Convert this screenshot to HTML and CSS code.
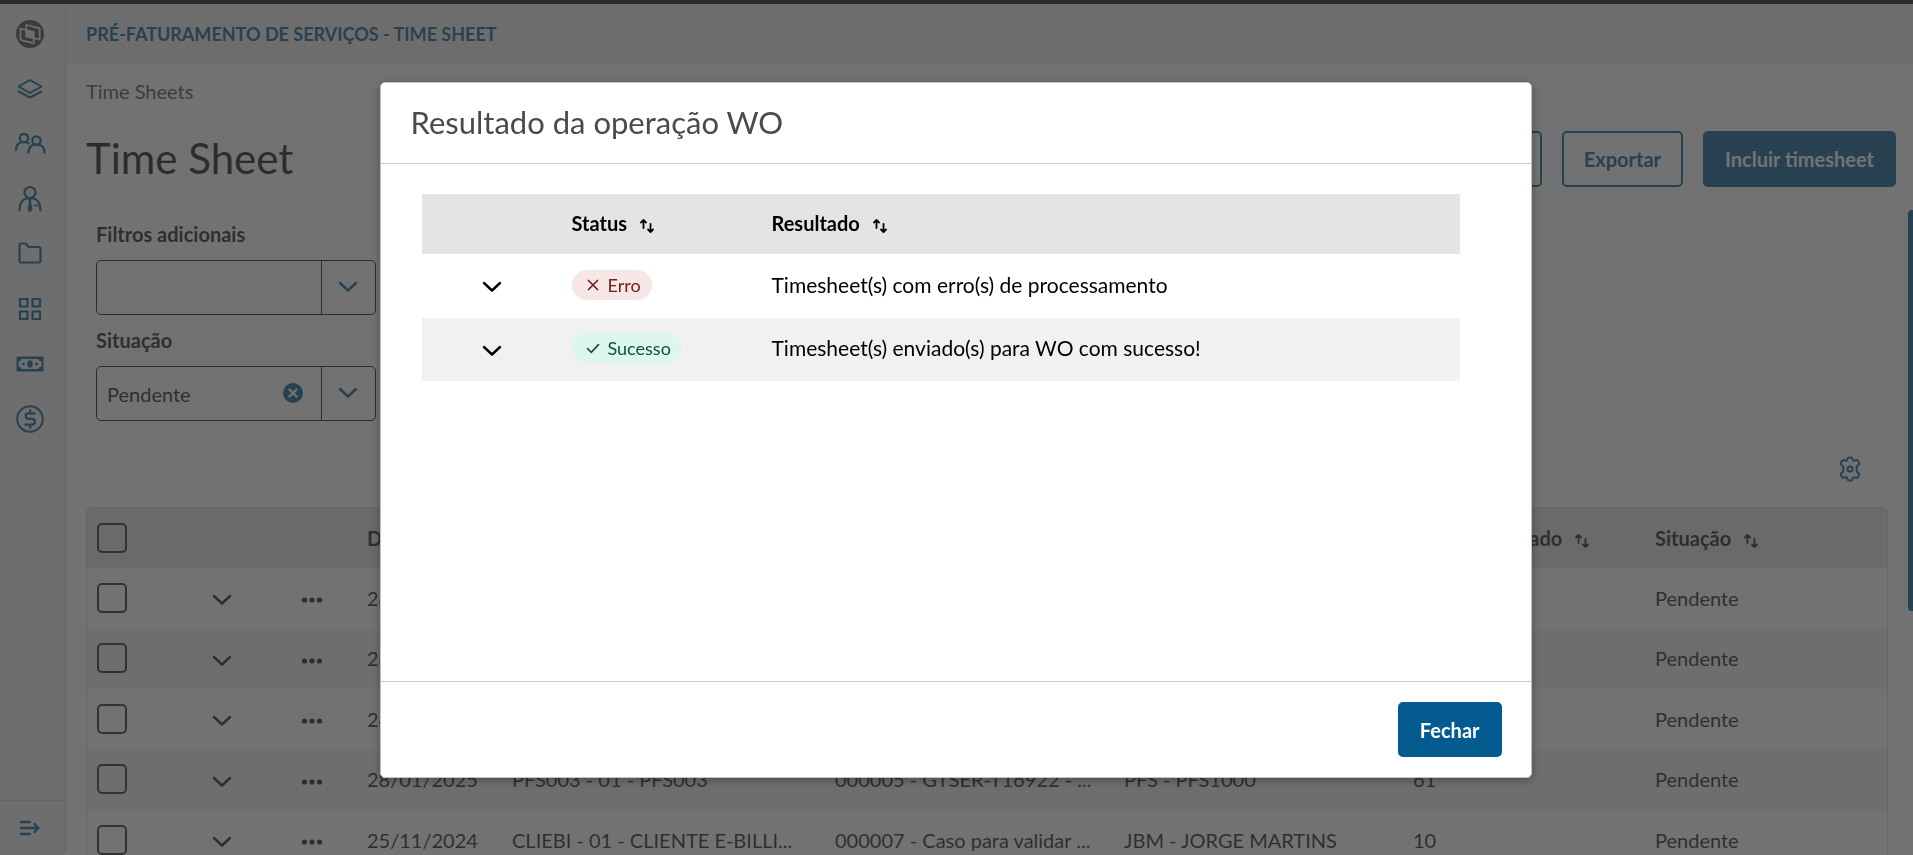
FILE: index.html
```html
<!DOCTYPE html>
<html lang="pt-BR">
<head>
<meta charset="utf-8">
<title>Time Sheet</title>
<link rel="stylesheet" href="styles.css">
</head>
<body>
<svg class="defs" aria-hidden="true">
  <symbol id="chevron" viewBox="0 0 20 12"><path d="M2 2l8 7.500 8-7.500" fill="none" stroke="currentColor" stroke-width="2.400" stroke-linecap="round" stroke-linejoin="round"/></symbol>
  <symbol id="dots" viewBox="0 0 22 8"><circle cx="3.500" cy="4" r="2.600" fill="currentColor"/><circle cx="11" cy="4" r="2.600" fill="currentColor"/><circle cx="18.500" cy="4" r="2.600" fill="currentColor"/></symbol>
  <symbol id="sort" viewBox="0 0 16 16"><g fill="none" stroke="currentColor" stroke-width="1.800" stroke-linecap="round" stroke-linejoin="round"><path d="M4.500 10V2.500M2 4.500l2.500-2.500L7 4.500"/><path d="M11.500 6v7.500M9 11.500l2.500 2.500 2.500-2.500"/></g></symbol>
</svg>
<div class="app">
  <nav class="sidebar" aria-label="Menu">
    <div class="menu">
      <a href="#" class="logo" aria-label="Início"><svg width="28" height="28" viewBox="0 0 28 28"><circle cx="14" cy="14" r="14" fill="currentColor"/><path class="logo-plate" fill-rule="evenodd" d="M9.300 3.900l13.700 3.200q1.500.400 1.500 2v11.300l-5.900-1.200v5L5 21q-1.400-.400-1.400-2V7.700l5.700 1.300zM11 6v3.400l7.600 1.800v6.300l4.200 1V9.800q0-.8-.8-1zM9.300 10.800l-4 -.9v8.500q0 .8.800 1l10.700 2.500v-2.800L9.300 17.300z"/></svg></a>
      <a href="#" aria-label="Camadas"><svg width="28" height="28" viewBox="0 0 28 28" fill="none" stroke="currentColor" stroke-width="2" stroke-linecap="round" stroke-linejoin="round"><path d="M14 5l11.500 6.500L14 18 2.500 11.500z"/><path d="M2.500 16.500L14 22.500l11.500-6"/></svg></a>
      <a href="#" aria-label="Clientes"><svg width="32" height="24" viewBox="0 0 32 24" fill="none" stroke="currentColor" stroke-width="2.200" stroke-linecap="round"><circle cx="10" cy="6" r="4.200"/><circle cx="22.500" cy="8.500" r="4.200"/><path d="M2 18c0-5 3-8 8-8 2 0 3.500.400 4.800 1.500M14.500 20.500c0-5 3-8 8-8s8 3 8 8"/></svg></a>
      <a href="#" aria-label="Profissionais"><svg width="26" height="28" viewBox="0 0 26 28" fill="none" stroke="currentColor" stroke-width="2.200" stroke-linecap="round"><circle cx="13" cy="7.500" r="5.500"/><path d="M2.600 25.500c0-8 3.400-12.500 10.400-12.500s10.400 4.500 10.400 12.500"/><path d="M17.500 20.500h3" stroke-width="1.500"/><path d="M11 13h4l-1 3.500 1.500 8L13 27.500l-2.500-3 1.500-8z" fill="currentColor" stroke="none"/></svg></a>
      <a href="#" aria-label="Pastas"><svg width="26" height="24" viewBox="0 0 26 24" fill="none" stroke="currentColor" stroke-width="2.200" stroke-linejoin="round"><path d="M2.500 3.500a2 2 0 0 1 2-2h4.200l3 3.500h9.800a2 2 0 0 1 2 2v11.500a2 2 0 0 1-2 2h-17a2 2 0 0 1-2-2z"/></svg></a>
      <a href="#" aria-label="Módulos"><svg width="24" height="24" viewBox="0 0 24 24" fill="none" stroke="currentColor" stroke-width="2.200" stroke-linejoin="round"><path d="M2 2h7.500v7.500H2zM14.500 2H22v7.500h-7.500zM2 14.500h7.500V22H2zM14.500 14.500H22V22h-7.500z"/></svg></a>
      <a href="#" aria-label="Faturamento"><svg width="28" height="16" viewBox="0 0 28 16"><path fill="currentColor" fill-rule="evenodd" d="M1.500.500h25a1 1 0 0 1 1 1v13a1 1 0 0 1-1 1h-25a1 1 0 0 1-1-1v-13a1 1 0 0 1 1-1zM5.500 3a3 3 0 0 1-3 2.500v5a3 3 0 0 1 3 2.500h17a3 3 0 0 1 3-2.500v-5a3 3 0 0 1-3-2.500z"/><ellipse cx="14" cy="8" rx="2.700" ry="3.800" fill="currentColor"/><circle cx="7.500" cy="8" r="1.400" fill="currentColor"/><circle cx="20.500" cy="8" r="1.400" fill="currentColor"/></svg></a>
      <a href="#" aria-label="Financeiro"><svg width="28" height="28" viewBox="0 0 28 28" fill="none" stroke="currentColor" stroke-width="2" stroke-linecap="round"><circle cx="14" cy="14" r="12.800"/><path stroke-width="2.300" d="M18.800 8.300h-6.300a2.800 2.800 0 0 0 0 5.600h3.500a2.900 2.900 0 0 1 0 5.800H9.500M14.200 5.500v2.500M14.200 20v2.500"/></svg></a>
    </div>
    <a href="#" class="expand" aria-label="Expandir menu"><svg width="22" height="18" viewBox="0 0 22 18" fill="none" stroke="currentColor" stroke-width="2.300" stroke-linecap="round" stroke-linejoin="round"><path d="M2 3h9M2 9h17M2 15h9M15.500 5l4 4-4 4"/></svg></a>
  </nav>
  <div class="main">
    <header class="topbar">PRÉ-FATURAMENTO DE SERVIÇOS - TIME SHEET</header>
    <main class="page">
      <div class="crumbs">Time Sheets</div>
      <div class="page-head">
        <h1>Time Sheet</h1>
        <div class="actions">
          <button type="button" class="btn">Ações</button>
          <button type="button" class="btn">Exportar</button>
          <button type="button" class="btn btn-primary">Incluir timesheet</button>
        </div>
      </div>
      <form class="filters">
        <label for="extra">Filtros adicionais</label>
        <div class="combo"><select id="extra"><option></option></select><svg class="combo-arrow" width="20" height="12"><use href="#chevron"/></svg></div>
        <label for="status">Situação</label>
        <div class="combo"><select id="status"><option>Pendente</option></select><button type="button" class="clear" aria-label="Limpar"><svg width="20" height="20" viewBox="0 0 20 20"><circle cx="10" cy="10" r="10" fill="currentColor"/><path d="M6.500 6.500l7 7M13.500 6.500l-7 7" stroke="#fff" stroke-width="2.400" stroke-linecap="round"/></svg></button><svg class="combo-arrow" width="20" height="12"><use href="#chevron"/></svg></div>
      </form>
      <div class="tools"><button type="button" class="gear" aria-label="Configurar colunas"><svg width="26" height="26" viewBox="0 0 26 26" fill="none" stroke="currentColor" stroke-width="2" stroke-linejoin="round"><path d="M10.500 2.800q.300-1.300 1.500-1.300h2q1.200 0 1.500 1.300l.4 1.300q.4 1 1.500.6l1.500-.6q1.200-.4 1.900.7l1.200 2q.6 1.100-.3 2l-1.200 1q-.8.7-.8 1.500v3.400q0 .8.800 1.500l1.200 1q.9.900.3 2l-1.200 2q-.7 1.100-1.900.7l-1.500-.6q-1.100-.4-1.500.6l-.4 1.300q-.3 1.300-1.500 1.300h-2q-1.200 0-1.500-1.300l-.4-1.300q-.4-1-1.500-.6l-1.500.6q-1.200.4-1.900-.7l-1.200-2q-.6-1.100.3-2l1.200-1q.8-.7.800-1.500v-3.400q0-.8-.8-1.500l-1.200-1q-.9-.9-.3-2l1.200-2q.7-1.100 1.900-.7l1.500.6q1.100.4 1.500-.6z"/><circle cx="13" cy="13" r="2.600"/></svg></button></div>
      <div class="grid-box">
        <table class="grid">
          <colgroup><col class="c-act"><col class="c-act"><col class="c-act"><col class="c-date"><col class="c-client"><col class="c-case"><col class="c-case"><col class="c-num"><col class="c-num"></colgroup>
          <thead><tr><th><input type="checkbox" aria-label="Selecionar todos"></th><th></th><th></th><th>Data</th><th>Cliente</th><th>Caso</th><th>Participante</th><th>Tempo apontado<svg class="sort" width="16" height="16"><use href="#sort"/></svg></th><th>Situação<svg class="sort" width="16" height="16"><use href="#sort"/></svg></th></tr></thead>
          <tbody>
            <tr><td><input type="checkbox" aria-label="Selecionar"></td><td class="mid"><svg width="20" height="12"><use href="#chevron"/></svg></td><td class="mid"><svg width="22" height="8"><use href="#dots"/></svg></td><td>28/01/2025</td><td></td><td></td><td></td><td></td><td>Pendente</td></tr>
            <tr><td><input type="checkbox" aria-label="Selecionar"></td><td class="mid"><svg width="20" height="12"><use href="#chevron"/></svg></td><td class="mid"><svg width="22" height="8"><use href="#dots"/></svg></td><td>28/01/2025</td><td></td><td></td><td></td><td></td><td>Pendente</td></tr>
            <tr><td><input type="checkbox" aria-label="Selecionar"></td><td class="mid"><svg width="20" height="12"><use href="#chevron"/></svg></td><td class="mid"><svg width="22" height="8"><use href="#dots"/></svg></td><td>28/01/2025</td><td></td><td></td><td></td><td></td><td>Pendente</td></tr>
            <tr><td><input type="checkbox" aria-label="Selecionar"></td><td class="mid"><svg width="20" height="12"><use href="#chevron"/></svg></td><td class="mid"><svg width="22" height="8"><use href="#dots"/></svg></td><td>28/01/2025</td><td>PFS003 - 01 - PFS003</td><td>000005 - GTSER-T16922 - ...</td><td>PFS - PFS1000</td><td>61</td><td>Pendente</td></tr>
            <tr><td><input type="checkbox" aria-label="Selecionar"></td><td class="mid"><svg width="20" height="12"><use href="#chevron"/></svg></td><td class="mid"><svg width="22" height="8"><use href="#dots"/></svg></td><td>25/11/2024</td><td>CLIEBI - 01 - CLIENTE E-BILLI...</td><td>000007 - Caso para validar ...</td><td>JBM - JORGE MARTINS</td><td>10</td><td>Pendente</td></tr>
          </tbody>
        </table>
      </div>
      <div class="scroll-thumb"></div>
    </main>
  </div>
</div>
<div class="overlay">
  <section class="modal" role="dialog" aria-modal="true" aria-labelledby="modal-title">
    <header class="modal-head"><h2 id="modal-title">Resultado da operação WO</h2></header>
    <div class="modal-body">
      <table class="results">
        <colgroup><col class="r-toggle"><col class="r-status"><col></colgroup>
        <thead><tr><th></th><th>Status<svg class="sort" width="16" height="16"><use href="#sort"/></svg></th><th>Resultado<svg class="sort" width="16" height="16"><use href="#sort"/></svg></th></tr></thead>
        <tbody>
          <tr><td class="toggle"><button type="button" aria-label="Detalhes"><svg width="20" height="12"><use href="#chevron"/></svg></button></td><td><span class="tag tag-error"><svg width="14" height="14" viewBox="0 0 14 14"><path d="M2.500 2.500l9 9M11.500 2.500l-9 9" stroke="currentColor" stroke-width="1.700" stroke-linecap="round"/></svg>Erro</span></td><td>Timesheet(s) com erro(s) de processamento</td></tr>
          <tr><td class="toggle"><button type="button" aria-label="Detalhes"><svg width="20" height="12"><use href="#chevron"/></svg></button></td><td><span class="tag tag-ok"><svg width="14" height="14" viewBox="0 0 14 14"><path d="M1.500 7.500l3.800 3.800 7.200-7.600" fill="none" stroke="currentColor" stroke-width="1.700" stroke-linecap="round"/></svg>Sucesso</span></td><td>Timesheet(s) enviado(s) para WO com sucesso!</td></tr>
        </tbody>
      </table>
    </div>
    <footer class="modal-foot"><button type="button" class="btn btn-primary">Fechar</button></footer>
  </section>
</div>
</body>
</html>
```

FILE: styles.css
```css
* { box-sizing: border-box; }
body {
  margin: 0;
  height: 100vh;
  overflow: hidden;
  font: 20px/28px Lato, "Noto Sans", sans-serif;
  color: #1d1d1d;
  background: #fff;
}
.defs { position: absolute; width: 0; height: 0; }
h1, h2 { margin: 0; font-weight: 400; }
button, select, input { font: inherit; color: inherit; }

.app { display: flex; height: 100vh; border-top: 4px solid #141414; }
.sidebar {
  display: flex;
  flex-direction: column;
  flex: none;
  width: 66px;
  background: #f0f0f0;
  border-right: 1px solid #d0d0d0;
  border-radius: 0 6px 6px 0;
}
.sidebar a { color: #045b8f; display: flex; justify-content: center; align-items: center; }
.menu { flex: 1; padding: 2px 5px 0 0; }
.menu a { height: 55px; }
.menu .logo { color: #3c4a50; }
.logo-plate { fill: #f0f0f0; }
.expand { height: 55px; padding-right: 5px; border-top: 1px solid #d0d0d0; }

.main { flex: 1; min-width: 0; }
.topbar {
  height: 60px;
  padding-left: 20px;
  line-height: 60px;
  font-size: 18px;
  font-weight: 700;
  color: #045b8f;
  background: #eeeeee;
}
.page { position: relative; padding: 11px 25px 0 20px; }
.crumbs { color: #4a4a4a; line-height: 32px; }
.page-head { display: flex; justify-content: space-between; align-items: center; margin: 21px -8px 0 0; height: 62px; }
h1 { font-size: 42px; line-height: 56px; color: #141414; padding-bottom: 2px; }
.actions { display: flex; gap: 20px; }
.btn {
  height: 56px;
  padding: 0 20px;
  border: 2px solid #045b8f;
  border-radius: 5px;
  background: transparent;
  color: #045b8f;
  font-weight: 700;
}
.btn-primary { background: #045b8f; color: #fff; }

.filters { display: grid; width: 290px; padding: 30px 0 0 10px; }
.filters label { font-weight: 700; line-height: 28px; margin-bottom: 12px; }
.combo { position: relative; margin-bottom: 11px; }
.combo select {
  display: block;
  width: 100%;
  height: 55px;
  padding: 0 10px;
  border: 1px solid #141414;
  border-radius: 5px;
  appearance: none;
  background: linear-gradient(#141414, #141414) right 53px top / 1px 100% no-repeat;
}
.combo-arrow { position: absolute; right: 18px; top: 21px; color: #045b8f; }
.clear { position: absolute; left: 187px; top: 17px; padding: 0; border: 0; background: none; color: #045b8f; line-height: 0; }
.tools { display: flex; justify-content: flex-end; padding: 24px 25px 25px 0; }
.gear { padding: 0; border: 0; background: none; color: #045b8f; line-height: 0; }

.grid-box { border: 1px solid #d6d6d6; border-radius: 5px 5px 0 0; overflow: hidden; }
table { width: 100%; border-collapse: collapse; table-layout: fixed; }
th { text-align: left; font-weight: 700; }
th, td { padding: 0 10px; white-space: nowrap; }
.grid tr { height: 60px; }
.grid tbody tr:nth-child(odd) { height: 61px; }
.grid thead tr { background: #e4e4e4; }
tbody tr:nth-child(even) { background: #f1f1f1; }
.grid td { padding-bottom: 2px; }
.c-act { width: 90px; }
.c-date { width: 145px; }
.c-client { width: 323px; }
.c-case { width: 289px; }
.c-num { width: 242px; }
.grid .mid { padding: 0 0 2px; text-align: center; }
td svg, .sort { vertical-align: middle; }
.sort { margin-left: 12px; }
.grid input {
  appearance: none;
  display: block;
  width: 30px;
  height: 30px;
  margin: 0;
  border: 2px solid #2a2a2a;
  border-radius: 5px;
}
.scroll-thumb { position: absolute; right: 0; top: 146px; width: 5px; height: 401px; background: #045b8f; border-radius: 4px 0 0 4px; }

.overlay {
  position: fixed;
  inset: 0;
  display: flex;
  justify-content: center;
  align-items: flex-start;
  padding: 82px 2px 0 0;
  background: rgba(54, 54, 54, .7);
}
.modal {
  width: 1152px;
  max-width: 96%;
  background: #fff;
  border: 1px solid #c3c3c3;
  border-radius: 5px;
  box-shadow: 0 2px 10px rgba(0, 0, 0, .3);
}
.modal-head { padding: 19px 30px 21px; border-bottom: 1px solid #c9c9c9; }
h2 { font-size: 31px; line-height: 40px; color: #4a4a4a; }
.modal-body { min-height: 517px; padding: 30px 71px 0 41px; color: #000; }
.results thead tr { height: 60px; background: #e4e4e4; }
.results tbody tr { height: 64px; }
.results tbody tr:last-child { height: 63px; }
.results th { padding-bottom: 2px; }
.results td { font-size: 21px; padding-bottom: 3px; }
.r-toggle { width: 140px; }
.r-status { width: 200px; }
.results .toggle { padding: 0 0 3px; text-align: center; }
.toggle button { padding: 0; border: 0; background: none; }
.tag { display: inline-flex; align-items: center; gap: 8px; height: 30px; padding: 0 11px 0 14px; border-radius: 15px; font-size: 18px; }
.tag-error { background: #f6e6e5; color: #72211d; }
.tag-ok { background: #def7ed; color: #0f5236; }
.modal-foot { display: flex; justify-content: flex-end; padding: 20px 29px; border-top: 1px solid #c9c9c9; }
.modal-foot .btn { height: 55px; }
```
